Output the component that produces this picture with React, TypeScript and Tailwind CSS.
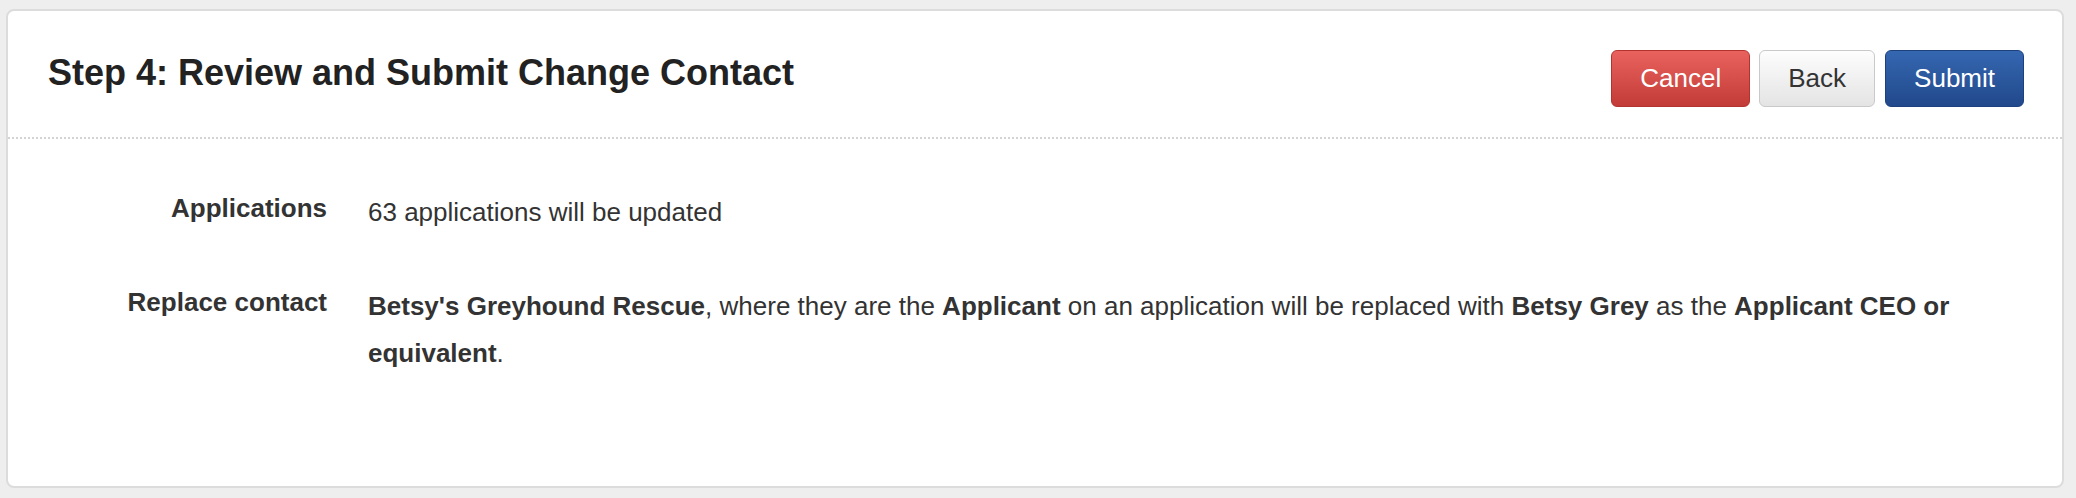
import React from 'react';

const rows = [
  { label: 'Applications', value: <>63 applications will be updated</> },
  {
    label: 'Replace contact',
    value: (
      <>
        <b>Betsy's Greyhound Rescue</b>, where they are the <b>Applicant</b> on an application will be
        replaced with <b>Betsy Grey</b> as the <b>Applicant CEO or equivalent</b>.
      </>
    ),
  },
];

export default function App() {
  return (
    <div
      className="min-h-screen bg-[#eeeeee] pt-[9px] pl-[6px] pr-[12px] pb-[10px]"
      style={{ fontFamily: '"Liberation Sans", Arial, Helvetica, sans-serif' }}
    >
      <div className="h-[479px] flex flex-col bg-white border-2 border-[#dcdcdc] rounded-[8px]">
        {/* Header */}
        <div className="flex items-start justify-between pl-[40px] pr-[38px] pt-[39px] pb-[30px] border-b-2 border-dotted border-[#d4d4d4]">
          <h1 className="mt-[5px] text-[36px] leading-none font-bold text-[#222222]">
            Step 4: Review and Submit Change Contact
          </h1>
          <div className="flex items-center">
            <button className="h-[57px] px-[28px] text-[26px] text-white rounded-[6px] border border-[#b3342f] bg-gradient-to-b from-[#ea625e] to-[#c23b36]">
              Cancel
            </button>
            <button className="ml-[9px] h-[57px] px-[28px] text-[26px] text-[#333333] rounded-[6px] border border-[#c9c9c9] bg-gradient-to-b from-[#fdfdfd] to-[#e4e4e4]">
              Back
            </button>
            <button className="ml-[10px] h-[57px] px-[28px] text-[26px] text-white rounded-[6px] border border-[#1c417e] bg-gradient-to-b from-[#3567b1] to-[#21498b]">
              Submit
            </button>
          </div>
        </div>

        {/* Body */}
        <div className="pl-[40px] pr-[38px] pt-[50px] flex flex-col gap-[47px]">
          {rows.map((row) => (
            <div key={row.label} className="flex items-start">
              <div className="w-[279px] shrink-0 text-right text-[26px] leading-[38px] font-bold text-[#333333]">
                {row.label}
              </div>
              <div className="ml-[41px] flex-1 text-[26px] leading-[47px] text-[#333333]">{row.value}</div>
            </div>
          ))}
        </div>
      </div>
    </div>
  );
}
